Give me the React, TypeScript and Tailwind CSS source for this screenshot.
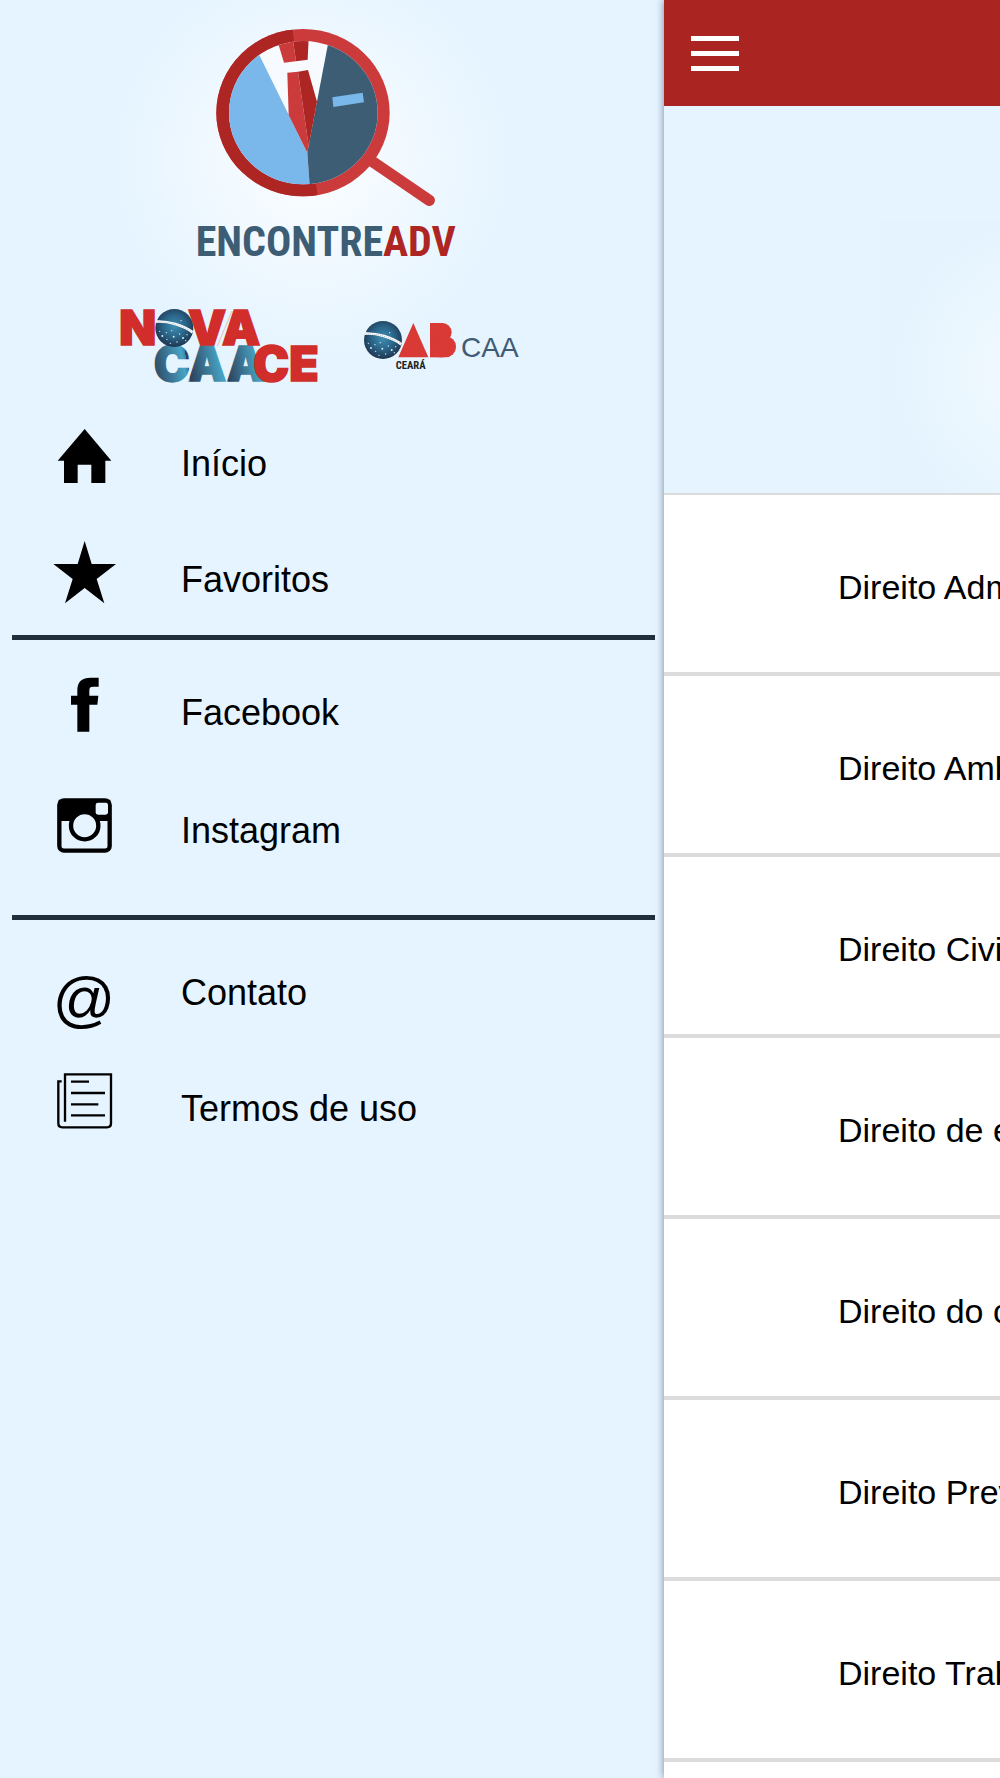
import type { ReactNode } from 'react';

const HomeIcon = () => (
  <svg viewBox="0 0 192 192" className="w-16 h-16" aria-hidden="true">
    <path d="M98 15L178 110H160V177H118V122H77V177H36V110H17Z" />
  </svg>
);

const StarIcon = () => (
  <svg viewBox="0 0 192 192" className="w-16 h-16" aria-hidden="true">
    <path d="M98 3L119 72H192L134 117L157 190L98 144L39 190L62 117L4 72H77Z" />
  </svg>
);

const FacebookIcon = () => (
  <svg viewBox="0 0 192 192" className="w-16 h-16" aria-hidden="true">
    <path d="M76 176V95H57V68H76V51C76 26 90 14 116 14H140V41H124C115 41 112 44 112 52V68H139L136 95H112V176Z" />
  </svg>
);

const InstagramIcon = () => (
  <svg viewBox="0 0 192 192" className="w-16 h-16" aria-hidden="true">
    <rect x="22" y="28" width="151" height="151" rx="14" fill="none" stroke="#000" strokeWidth="13" />
    <path d="M20 26H175V90H20Z" />
    <rect x="131" y="35" width="37" height="36" rx="7" fill="#e5f4ff" />
    <circle cx="98" cy="104" r="41" fill="#e5f4ff" stroke="#000" strokeWidth="13" />
  </svg>
);

const TermsIcon = () => (
  <svg viewBox="0 0 192 192" className="w-16 h-16" fill="none" stroke="#000" strokeWidth="7" aria-hidden="true">
    <path d="M29 37H19V163Q19 175 31 175H165Q177 175 177 163V16H39V158" />
    <path d="M57 38H111M57 72H159M57 106H139M57 139H159" />
  </svg>
);

const Globe = ({ id }: { id: string }) => (
  <g>
    <defs>
      <radialGradient id={id} cx="0.5" cy="0.45" r="0.55">
        <stop offset="0" stopColor="#3f8fb4" />
        <stop offset="0.55" stopColor="#2a6488" />
        <stop offset="1" stopColor="#1e3550" />
      </radialGradient>
    </defs>
    <circle r="57" fill={`url(#${id})`} />
    <path d="M-57 -19C-20 -22 28 -8 55 13" fill="none" stroke="#fff" strokeWidth="8" />
    <path d="M-56 -18C-20 -21 28 -7 55 13" fill="none" stroke="#8b9aa6" strokeWidth="2" strokeDasharray="3 3" />
    <g fill="#d8eef6">
      <circle cx="-44" cy="10" r="2" />
      <circle cx="-36" cy="24" r="3" />
      <circle cx="-24" cy="14" r="2" />
      <circle cx="-22" cy="34" r="2" />
      <circle cx="-8" cy="8" r="2" />
      <circle cx="-2" cy="26" r="3" />
      <circle cx="8" cy="42" r="2" />
      <circle cx="16" cy="18" r="2" />
      <circle cx="26" cy="30" r="3" />
      <circle cx="38" cy="20" r="2" />
      <circle cx="34" cy="38" r="2" />
      <circle cx="-12" cy="46" r="2" />
      <circle cx="20" cy="-22" r="2" />
    </g>
  </g>
);

const EncontreAdvLogo = () => (
  <svg viewBox="6 0 900 810" className="w-[300px] h-[270px]" role="img" aria-label="EncontreAdv">
    <defs>
      <clipPath id="lens">
        <ellipse cx="370" cy="308" rx="223" ry="215" />
      </clipPath>
      <clipPath id="ring-left">
        <path d="M0 0H328L423 620H0Z" />
      </clipPath>
    </defs>
    <path d="M560 443L748 571" stroke="#cc3b3c" strokeWidth="34" strokeLinecap="round" />
    <ellipse cx="369" cy="308" rx="260" ry="251" fill="#cc3b3c" />
    <ellipse cx="369" cy="308" rx="260" ry="251" fill="#ad2624" clipPath="url(#ring-left)" />
    <g clipPath="url(#lens)">
      <path d="M100 60H650V560H100Z" fill="#f7fbff" />
      <path d="M205 68L382 428L390 540H100V68Z" fill="#7ab7ea" />
      <path d="M452 60L410 280L382 428L390 540H640V60Z" fill="#3d5d75" />
      <path d="M290 85H338L348 154L312 158Z" fill="#cc3b3c" />
      <path d="M338 85H386L383 149L348 154Z" fill="#ad2624" />
      <path d="M322 188L354 185L386 408L382 428L326 315Z" fill="#cc3b3c" />
      <path d="M354 185L384 180L411 275L386 408Z" fill="#ad2624" />
      <path d="M457 262L548 248L552 277L460 291Z" fill="#7ab7ea" />
    </g>
    <text
      x="437"
      y="738"
      textAnchor="middle"
      className="text-[126px] font-bold font-['Roboto_Condensed','Liberation_Sans_Narrow','Liberation_Sans',sans-serif]"
      fill="#3d5d75"
    >
      ENCONTRE<tspan fill="#ad2624">ADV</tspan>
    </text>
  </svg>
);

const NovaCaaceLogo = () => (
  <svg
    viewBox="0 0 660 300"
    className="w-[220px] h-[100px] text-[144px] font-black font-['Inter',sans-serif]"
    role="img"
    aria-label="Nova CAACE"
  >
    <defs>
      <linearGradient id="caa" gradientUnits="userSpaceOnUse" x1="126" y1="240" x2="234" y2="220" spreadMethod="repeat">
        <stop offset="0" stopColor="#2b3f5a" />
        <stop offset="0.9" stopColor="#48a3c4" />
        <stop offset="1" stopColor="#3a86a8" />
      </linearGradient>
    </defs>
    <text x="131" y="258" fill="url(#caa)" stroke="url(#caa)" strokeWidth="4">
      CAA
    </text>
    <g fill="#d02d2b" stroke="#d02d2b" strokeWidth="5">
      <text x="28" y="151">
        N
      </text>
      <text x="234" y="151">
        VA
      </text>
      <text x="430" y="258">
        CE
      </text>
    </g>
    <path d="M322 153L366 48" stroke="#f3b9b8" strokeWidth="3" />
    <g transform="translate(193 99)">
      <Globe id="globe-nova" />
    </g>
  </svg>
);

const OabLogo = () => (
  <svg viewBox="0 -2 612 240" className="w-[204px] h-20 font-['Liberation_Sans',sans-serif]" role="img" aria-label="OAB Ceará CAA">
    <g transform="translate(99 103)">
      <Globe id="globe-oab" />
    </g>
    <path d="M190 52L235 155H145Z" fill="#d93a36" />
    <rect x="240" y="52" width="40" height="103" fill="#d93a36" />
    <rect x="240" y="52" width="65" height="56" rx="28" fill="#d93a36" />
    <rect x="240" y="92" width="78" height="63" rx="31" fill="#d93a36" />
    <text x="137" y="191" className="text-[32px] font-bold font-['Roboto_Condensed','Liberation_Sans_Narrow','Liberation_Sans',sans-serif]" fill="#222">
      CEARÁ
    </text>
    <text x="333" y="155" className="text-[84px]" fill="#3f5b75">
      CAA
    </text>
  </svg>
);

const MenuItem = ({ icon, label }: { icon: ReactNode; label: string }) => (
  <li>
    <a href="#" className="flex items-center gap-[65px] h-[116px] pl-[52px]">
      <span className="flex justify-center w-16">{icon}</span>
      <span className="pt-4 text-4xl">{label}</span>
    </a>
  </li>
);

const areas = [
  'Direito Administrativo',
  'Direito Ambiental',
  'Direito Civil',
  'Direito de empresa',
  'Direito do consumidor',
  'Direito Previdenciário',
  'Direito Trabalhista',
];

const Drawer = () => (
  <aside className="w-[66.4%] shrink-0 bg-[#e5f4ff]">
    <div className="bg-[radial-gradient(circle_at_47%_160px,#fafdff_0px,#f1f9ff_100px,#e5f4ff_200px)]">
      <div className="flex justify-center pt-[10px]">
        <EncontreAdvLogo />
      </div>
      <div className="flex items-center justify-center gap-5 mt-[15px]">
        <NovaCaaceLogo />
        <OabLogo />
      </div>
    </div>
    <nav className="mt-[3px]">
      <ul>
        <MenuItem icon={<HomeIcon />} label="Início" />
        <MenuItem icon={<StarIcon />} label="Favoritos" />
      </ul>
      <hr className="ml-3 mr-[9px] mt-[5px] mb-[7px] border-0 h-[5px] bg-[#212f3d]" />
      <ul className="flex flex-col gap-0.5">
        <MenuItem icon={<FacebookIcon />} label="Facebook" />
        <MenuItem icon={<InstagramIcon />} label="Instagram" />
      </ul>
      <hr className="ml-3 mr-[9px] mt-[34px] mb-[7px] border-0 h-[5px] bg-[#212f3d]" />
      <ul>
        <MenuItem icon={<span className="pt-7 text-[62px] leading-none">@</span>} label="Contato" />
        <MenuItem icon={<TermsIcon />} label="Termos de uso" />
      </ul>
    </nav>
  </aside>
);

const App = () => {
  return (
    <div className="flex h-screen overflow-hidden text-black font-['Liberation_Sans',Arial,sans-serif]">
      <Drawer />

      <main className="relative z-10 flex-1 min-w-0 overflow-hidden bg-white shadow-[0_0_8px_rgba(20,40,70,0.55)]">
        <header className="flex items-center h-[106px] pl-[27px] bg-[#aa2422]">
          <button type="button" aria-label="Menu" className="flex flex-col justify-between w-12 h-[35px]">
            <span className="w-full h-[5px] bg-white"></span>
            <span className="w-full h-[5px] bg-white"></span>
            <span className="w-full h-[5px] bg-white"></span>
          </button>
        </header>

        <div className="h-[389px] pl-[216px] pt-[114px] bg-[#e5f4ff] border-b-2 border-[#dcdcdc]">
          <div className="h-full bg-[radial-gradient(circle_at_170px_152px,#f6faff_0px,#ebf7fe_90px,#e4f3fe_160px)]"></div>
        </div>

        <ul>
          {areas.map((area) => (
            <li key={area} className="border-b-4 border-[#dcdcdc]">
              <a href="#" className="flex items-center h-[177px] pl-[174px] pt-2 text-[34px] whitespace-nowrap">
                {area}
              </a>
            </li>
          ))}
        </ul>
      </main>
    </div>
  );
};

export default App;
